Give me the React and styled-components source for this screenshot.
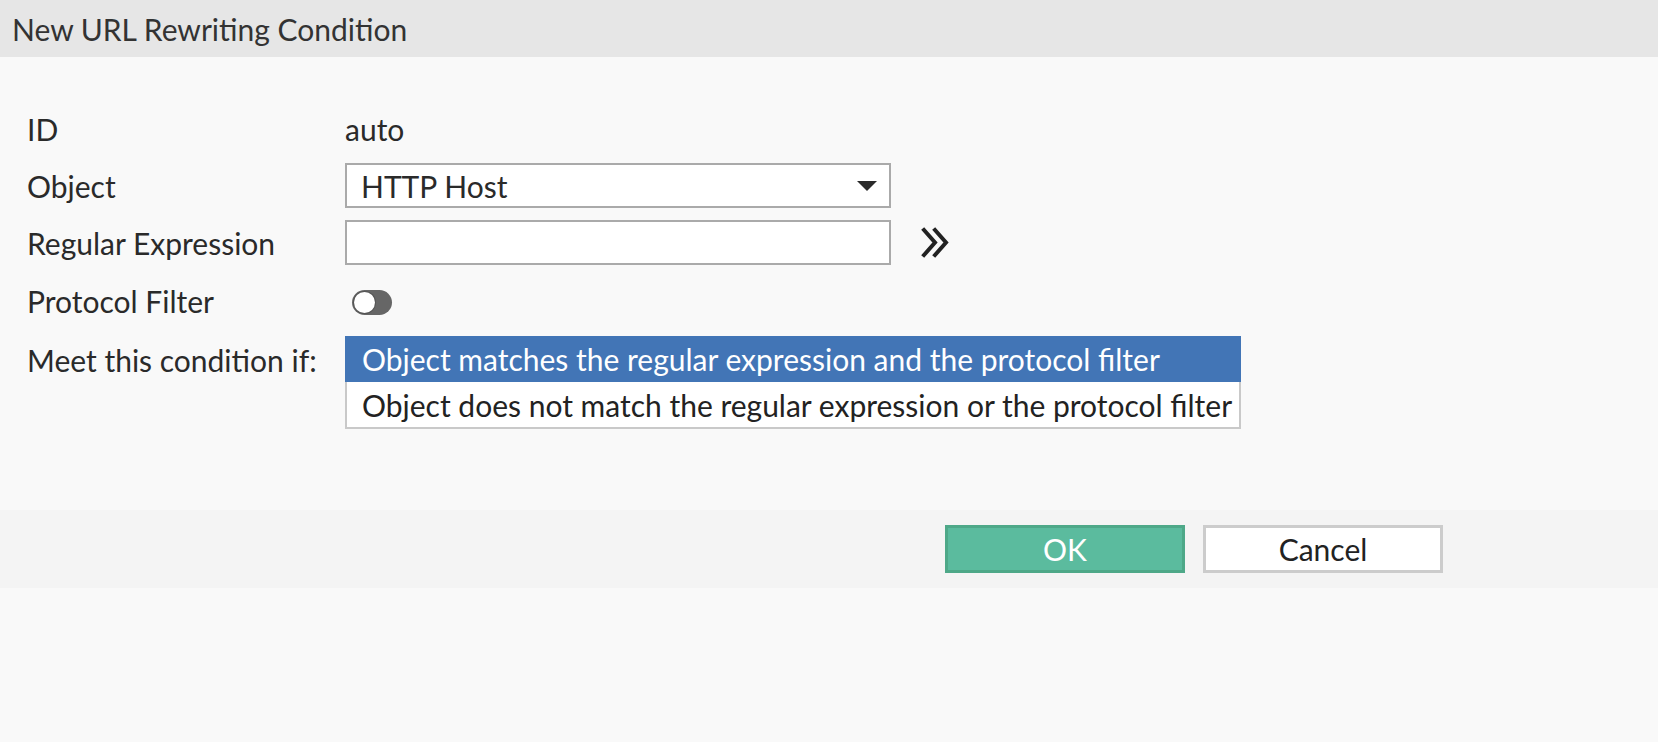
import React, { useState } from "react";
import styled, { createGlobalStyle } from "styled-components";

const GlobalStyle = createGlobalStyle`
  html, body {
    margin: 0;
    padding: 0;
    background: #f9f9f9;
  }
  body {
    font-family: Lato, "Open Sans", sans-serif;
    color: #2a2a2a;
  }
`;

const Dialog = styled.div`
  width: 1658px;
  min-height: 742px;
  display: flex;
  flex-direction: column;
  background: #f9f9f9;
`;

const Header = styled.div`
  height: 57px;
  background: #e6e6e6;
  display: flex;
  align-items: center;
  padding-left: 12px;
  font-size: 30px;
  color: #333;
`;

const Body = styled.div`
  padding: 49px 0 0 27px;
  height: 404px;
  display: flex;
  flex-direction: column;
  gap: 12px;
`;

const Row = styled.div`
  display: flex;
  align-items: ${(p) => (p.top ? "flex-start" : "center")};
  min-height: ${(p) => p.h || 45}px;
`;

const Label = styled.div`
  width: 318px;
  flex-shrink: 0;
  font-size: 30px;
  line-height: ${(p) => (p.top ? "48px" : "normal")};
`;

const Value = styled.div`
  font-size: 30px;
`;

const Select = styled.div`
  box-sizing: border-box;
  width: 546px;
  height: 45px;
  border: 2px solid #aaa;
  background: #fff;
  display: flex;
  align-items: center;
  justify-content: space-between;
  padding: 0 12px 0 14px;
  font-size: 30px;
`;

const Caret = styled.span`
  width: 0;
  height: 0;
  border-left: 10px solid transparent;
  border-right: 10px solid transparent;
  border-top: 10px solid #2a2a2a;
`;

const InputWrap = styled.div`
  display: flex;
  align-items: center;
  gap: 30px;
`;

const TextInput = styled.input`
  box-sizing: border-box;
  width: 546px;
  height: 45px;
  border: 2px solid #aaa;
  background: #fff;
  outline: none;
  padding: 0 14px;
  font-family: inherit;
  font-size: 30px;
`;

const Toggle = styled.button`
  box-sizing: border-box;
  margin: 3px 0 0 7px;
  width: 40px;
  height: 25px;
  border-radius: 13px;
  border: none;
  padding: 0;
  background: #666;
  position: relative;
  cursor: pointer;
  &::after {
    content: "";
    position: absolute;
    top: 2px;
    left: ${(p) => (p.on ? "17px" : "2px")};
    width: 21px;
    height: 21px;
    border-radius: 50%;
    background: #fff;
    box-shadow: 0 0 0 1px #555;
  }
`;

const OptionList = styled.div`
  display: flex;
  flex-direction: column;
  width: 896px;
`;

const Option = styled.div`
  box-sizing: border-box;
  height: ${(p) => (p.first ? "46px" : "47px")};
  display: flex;
  align-items: center;
  padding-left: 15px;
  font-size: 30px;
  cursor: pointer;
  background: ${(p) => (p.selected ? "#4275b6" : "#fff")};
  color: ${(p) => (p.selected ? "#fff" : "#222")};
  border: 2px solid ${(p) => (p.selected ? "#4275b6" : "#c9c9c9")};
  border-top-width: ${(p) => (p.first ? "2px" : "0")};
`;

const Footer = styled.div`
  height: 78px;
  background: #f4f4f4;
  display: flex;
  align-items: center;
  justify-content: flex-end;
  gap: 18px;
  padding-right: 215px;
`;

const Button = styled.button`
  box-sizing: border-box;
  width: 240px;
  height: 48px;
  font-family: inherit;
  font-size: 30px;
  cursor: pointer;
  border: 3px solid ${(p) => (p.primary ? "#4ea888" : "#cccccc")};
  background: ${(p) => (p.primary ? "#5bbb9e" : "#fff")};
  color: ${(p) => (p.primary ? "#fff" : "#222")};
`;

function Chevrons() {
  return (
    <svg width="30" height="31" viewBox="0 0 30 31">
      <path
        d="M3 3 L14 15.5 L3 28 M14 3 L25 15.5 L14 28"
        fill="none"
        stroke="#222"
        strokeWidth="4"
        strokeLinecap="square"
      />
    </svg>
  );
}

const options = [
  "Object matches the regular expression and the protocol filter",
  "Object does not match the regular expression or the protocol filter",
];

export default function App() {
  const [filterOn, setFilterOn] = useState(false);
  const [selected, setSelected] = useState(0);
  const [regex, setRegex] = useState("");

  return (
    <>
      <GlobalStyle />
      <Dialog>
        <Header>New URL Rewriting Condition</Header>
        <Body>
          <Row>
            <Label>ID</Label>
            <Value>auto</Value>
          </Row>
          <Row>
            <Label>Object</Label>
            <Select>
              HTTP Host
              <Caret />
            </Select>
          </Row>
          <Row>
            <Label>Regular Expression</Label>
            <InputWrap>
              <TextInput value={regex} onChange={(e) => setRegex(e.target.value)} />
              <Chevrons />
            </InputWrap>
          </Row>
          <Row h={47}>
            <Label>Protocol Filter</Label>
            <Toggle on={filterOn ? 1 : 0} onClick={() => setFilterOn(!filterOn)} />
          </Row>
          <Row top>
            <Label top>Meet this condition if:</Label>
            <OptionList>
              {options.map((o, i) => (
                <Option
                  key={i}
                  first={i === 0 ? 1 : 0}
                  selected={i === selected}
                  onClick={() => setSelected(i)}
                >
                  {o}
                </Option>
              ))}
            </OptionList>
          </Row>
        </Body>
        <Footer>
          <Button primary={1}>OK</Button>
          <Button>Cancel</Button>
        </Footer>
      </Dialog>
    </>
  );
}
